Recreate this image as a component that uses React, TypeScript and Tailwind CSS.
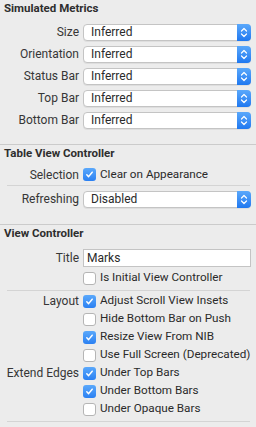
import React from "react";

const font = { fontFamily: 'Roboto, "Liberation Sans", Arial, sans-serif' };

const Select = ({ value }: { value: string }) => (
  <div className="flex h-[17px] flex-1 items-stretch rounded-[4px] border border-[#c4c4c4] bg-white shadow-[0_1px_0_rgba(0,0,0,0.06)]">
    <div className="flex flex-1 items-center pl-[7px] text-[12px] leading-none text-[#2a2a2a]">
      {value}
    </div>
    <div className="-m-px flex w-[14px] items-center justify-center rounded-r-[4px] bg-gradient-to-b from-[#5aa8fb] to-[#1e78f0]">
      <svg width="8" height="11" viewBox="0 0 8 11" fill="none">
        <path d="M1.5 4 L4 1.5 L6.5 4" stroke="white" strokeWidth="1.2" strokeLinecap="round" strokeLinejoin="round" />
        <path d="M1.5 7 L4 9.5 L6.5 7" stroke="white" strokeWidth="1.2" strokeLinecap="round" strokeLinejoin="round" />
      </svg>
    </div>
  </div>
);

const Check = ({ on }: { on?: boolean }) =>
  on ? (
    <div className="flex h-[13px] w-[13px] shrink-0 items-center justify-center rounded-[3px] bg-gradient-to-b from-[#5aa8fb] to-[#2a80f2]">
      <svg width="9" height="9" viewBox="0 0 9 9" fill="none">
        <path d="M1.8 4.8 L3.6 6.6 L7.2 2.2" stroke="white" strokeWidth="1.5" strokeLinecap="round" strokeLinejoin="round" />
      </svg>
    </div>
  ) : (
    <div className="h-[13px] w-[13px] shrink-0 rounded-[3px] border border-[#b5b5b5] bg-white" />
  );

const Label = ({ children }: { children?: React.ReactNode }) => (
  <div className="w-[79px] shrink-0 whitespace-nowrap text-right text-[12px] leading-none text-[#363636]">{children}</div>
);

const SelectRow = ({ label, value }: { label: string; value: string }) => (
  <div className="flex h-[22px] items-center gap-[4px] pr-[5px]">
    <Label>{label}</Label>
    <Select value={value} />
  </div>
);

const CheckText = ({ children }: { children: React.ReactNode }) => (
  <span className="whitespace-nowrap text-[11.7px] leading-none text-[#2a2a2a]">{children}</span>
);

const CheckRow = ({ label, text, on }: { label?: string; text: string; on?: boolean }) => (
  <div className="flex h-[18px] items-center gap-[4px]">
    <Label>{label}</Label>
    <Check on={on} />
    <CheckText>{text}</CheckText>
  </div>
);

const Heading = ({ children }: { children: React.ReactNode }) => (
  <div className="flex h-[18px] items-center pl-[4px] text-[11.5px] font-bold leading-none text-[#2e2e2e]">
    {children}
  </div>
);

export default function App() {
  return (
    <div className="h-[427px] w-[256px] overflow-hidden bg-[#ececec]" style={font}>
      <Heading>Simulated Metrics</Heading>
      <div className="mt-[3px] pb-[13px]">
        <SelectRow label="Size" value="Inferred" />
        <SelectRow label="Orientation" value="Inferred" />
        <SelectRow label="Status Bar" value="Inferred" />
        <SelectRow label="Top Bar" value="Inferred" />
        <SelectRow label="Bottom Bar" value="Inferred" />
      </div>
      <div className="h-px bg-[#cbcbcb]" />

      <Heading>Table View Controller</Heading>
      <div className="flex h-[22px] items-center gap-[4px] pt-[1px]">
        <Label>Selection</Label>
        <Check on />
        <CheckText>Clear on Appearance</CheckText>
      </div>
      <div className="ml-[7px] mr-[6px] h-px bg-[#d4d4d4]" />
      <div className="flex h-[26px] items-center gap-[4px] pr-[5px]">
        <Label>Refreshing</Label>
        <Select value="Disabled" />
      </div>
      <div className="h-[12px]" />
      <div className="h-px bg-[#cbcbcb]" />

      <Heading>View Controller</Heading>
      <div className="mt-[6px] flex items-center gap-[4px] pr-[5px]">
        <Label>Title</Label>
        <div className="flex h-[18px] flex-1 items-center border border-[#c4c4c4] bg-white pl-[3px] text-[12px] leading-none text-[#2a2a2a]">
          Marks
        </div>
      </div>
      <div className="mt-[2px]">
        <CheckRow text="Is Initial View Controller" />
      </div>
      <div className="ml-[7px] mr-[6px] mt-[3px] h-px bg-[#d4d4d4]" />
      <div className="mt-[1px]">
        <CheckRow label="Layout" text="Adjust Scroll View Insets" on />
        <CheckRow text="Hide Bottom Bar on Push" />
        <CheckRow text="Resize View From NIB" on />
        <CheckRow text="Use Full Screen (Deprecated)" />
        <CheckRow label="Extend Edges" text="Under Top Bars" on />
        <CheckRow text="Under Bottom Bars" on />
        <CheckRow text="Under Opaque Bars" />
      </div>
      <div className="ml-[7px] mr-[6px] mt-[3px] h-px bg-[#d4d4d4]" />
    </div>
  );
}
